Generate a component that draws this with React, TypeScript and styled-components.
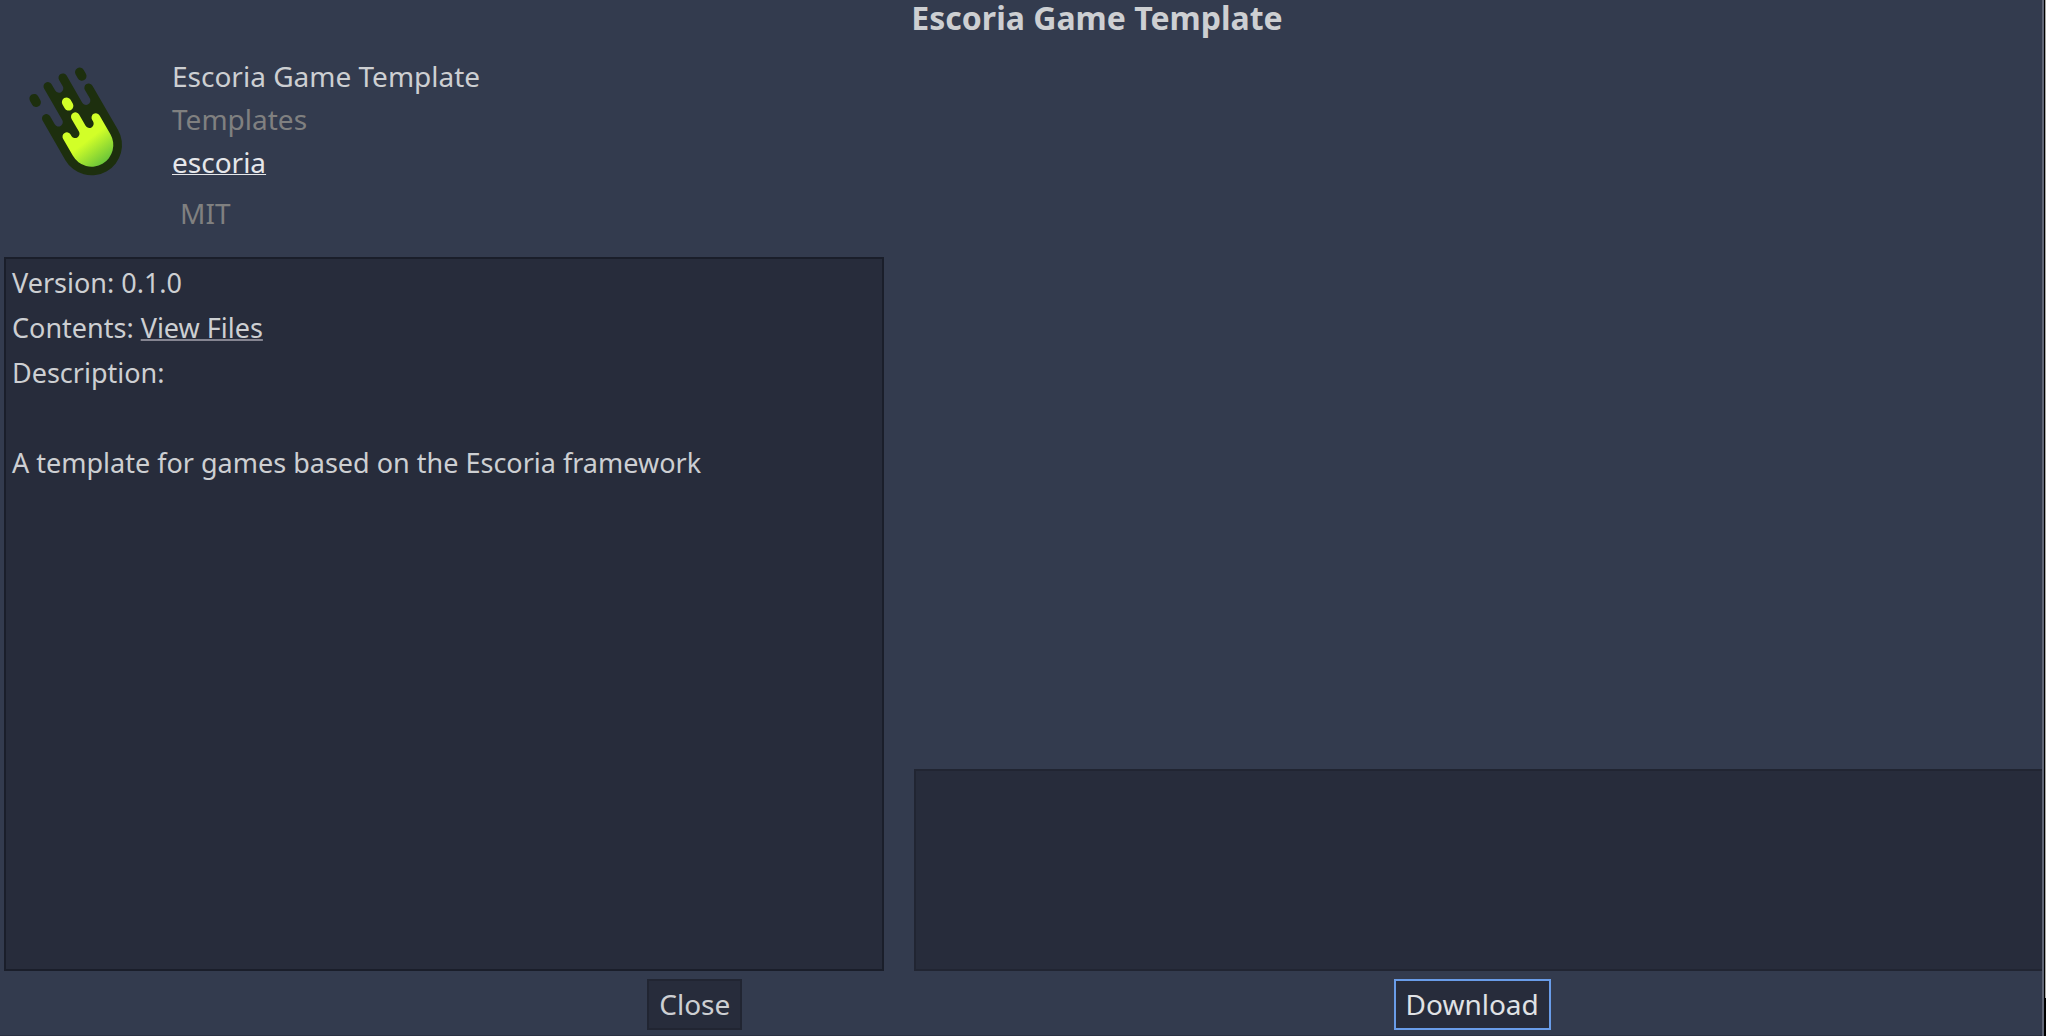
import React from "react";
import styled, { createGlobalStyle } from "styled-components";

const GlobalStyle = createGlobalStyle`
  * { box-sizing: border-box; }
  body {
    margin: 0;
    background: #333b4e;
    color: #cdcfd2;
    font-family: "Noto Sans", "Open Sans", sans-serif;
    font-size: 28px;
  }
`;

const Frame = styled.div`
  display: flex;
  height: 100vh;
  overflow: hidden;
`;

const Dialog = styled.main`
  display: flex;
  flex-direction: column;
  flex: 1;
  min-width: 0;
  border-right: 2px solid #5f6575;
`;

const WindowEdge = styled.div`
  width: 2px;
  background: #a9a9a6;
  border-left: 1px solid #000;
  border-bottom: 38px solid #000;
`;

const Title = styled.h1`
  margin: 0;
  padding: 0 0 2px 152px;
  font-size: 32px;
  font-weight: 700;
  line-height: 36px;
  text-align: center;
`;

const Content = styled.div`
  flex: 1;
  min-height: 0;
  display: grid;
  grid-template-columns: minmax(0, 110fr) minmax(0, 141fr);
  gap: 30px;
  padding-left: 4px;
`;

const Column = styled.section`
  display: flex;
  flex-direction: column;
  min-height: 0;
`;

const AssetHeader = styled.header`
  display: flex;
  height: 219px;
  padding-top: 17px;
`;

const LogoBox = styled.div`
  width: 168px;

  svg {
    display: block;
    margin: -15px 0 0 -4px;
  }
`;

const Meta = styled.div`
  display: flex;
  flex-direction: column;
  align-items: flex-start;
  line-height: 43px;
`;

const Muted = styled.span`
  color: #808080;
`;

const License = styled(Muted)`
  padding: 8px;
`;

const TextLink = styled.a<{ $bright?: boolean }>`
  color: ${(p) => (p.$bright ? "#e6e7ea" : "inherit")};
  text-decoration-line: underline;
  text-decoration-color: ${(p) => (p.$bright ? "#e6e7ea" : "#858591")};
  text-decoration-thickness: ${(p) => (p.$bright ? 1 : 2)}px;
  text-decoration-skip-ink: none;
  text-underline-offset: 1px;
`;

const Panel = styled.div<{ $edge: string }>`
  background: #272c3b;
  border: 2px solid ${(p) => p.$edge};
`;

const Description = styled(Panel)`
  flex: 1;
  padding: 1px 6px;
  font-size: 27px;
  line-height: 45px;

  p { margin: 0; }
  p + p:last-child { margin-top: 45px; }
`;

const Preview = styled.div`
  flex: 1;
`;

const Thumbnails = styled(Panel)`
  height: 202px;
  border-right: 0;
`;

const Footer = styled.footer`
  display: flex;
  padding: 8px 0 5px;
  border-bottom: 1px solid #2b3142;
`;

const Spacer = styled.div<{ $grow: number }>`
  flex: ${(p) => p.$grow} 0 0;
`;

const Button = styled.button<{ $focused?: boolean }>`
  height: 51px;
  padding: 0 10px;
  border: 2px solid ${(p) => (p.$focused ? "#699ce8" : "#212532")};
  border-radius: 0;
  background: #272c3b;
  color: ${(p) => (p.$focused ? "#e0e2e5" : "#cdcfd2")};
  font: inherit;
  line-height: 45px;
`;

function MeteorLogo() {
  return (
    <svg width="160" height="160" viewBox="0 0 480 480" role="img" aria-label="Escoria logo">
      <defs>
        <linearGradient id="glow" gradientUnits="userSpaceOnUse" x1="-6" y1="-18" x2="6" y2="68">
          <stop offset="0" stopColor="#d2ff28" />
          <stop offset="1" stopColor="#66c23a" />
        </linearGradient>
      </defs>
      <g transform="translate(275 315) rotate(-30)">
        <g fill="#1d2f0e">
          <path d="M-91 0V-137a13 13 0 0 1 26 0V-109a13 13 0 0 0 26 0V-218a13 13 0 0 1 26 0V-196a13 13 0 0 0 26 0V-218a13 13 0 0 1 26 0V-124a13 13 0 0 0 26 0V-153a13 13 0 0 1 26 0V0A91 91 0 0 1-91 0Z" />
          <rect x="-94" y="-221" width="28" height="41" rx="14" />
          <rect x="64" y="-221" width="28" height="41" rx="14" />
        </g>
        <path
          fill="url(#glow)"
          d="M-65 0V-59a13 13 0 0 1 26 0V-54a13 13 0 0 0 26 0V-98a13 13 0 0 1 26 0V-59a13 13 0 0 0 26 0V-65a13 13 0 0 1 26 0V0A65 65 0 0 1-65 0Z"
        />
        <rect x="-15" y="-163" width="28" height="41" rx="14" fill="#d2ff28" />
      </g>
    </svg>
  );
}

export default function App() {
  return (
    <Frame>
      <GlobalStyle />
      <Dialog>
        <Title>Escoria Game Template</Title>
        <Content>
          <Column>
            <AssetHeader>
              <LogoBox>
                <MeteorLogo />
              </LogoBox>
              <Meta>
                <span>Escoria Game Template</span>
                <Muted>Templates</Muted>
                <TextLink href="#author" $bright>escoria</TextLink>
                <License>MIT</License>
              </Meta>
            </AssetHeader>
            <Description $edge="#1a1e2a">
              <p>Version: 0.1.0</p>
              <p>
                Contents: <TextLink href="#files">View Files</TextLink>
              </p>
              <p>Description:</p>
              <p>A template for games based on the Escoria framework</p>
            </Description>
          </Column>
          <Column>
            <Preview />
            <Thumbnails $edge="#212532" />
          </Column>
        </Content>
        <Footer>
          <Spacer $grow={647} />
          <Button type="button">Close</Button>
          <Spacer $grow={651} />
          <Button type="button" $focused>Download</Button>
          <Spacer $grow={491} />
        </Footer>
      </Dialog>
      <WindowEdge />
    </Frame>
  );
}
